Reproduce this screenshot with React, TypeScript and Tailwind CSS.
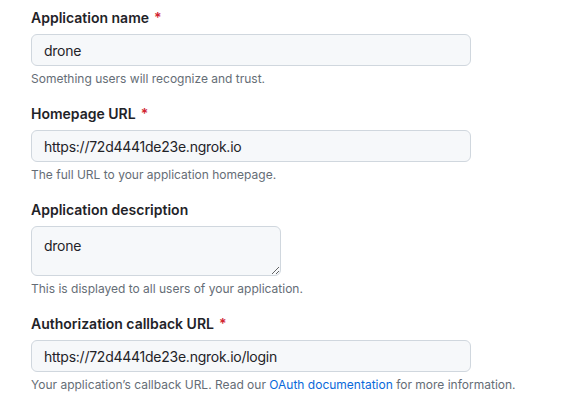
import React from "react";

const font = { fontFamily: "Inter, 'Liberation Sans', sans-serif" };

function Label({ text, required }: { text: string; required?: boolean }) {
  return (
    <label className="block text-[14px] leading-[20px] font-semibold text-[#1f2328] mb-[6px]">
      {text}
      {required && <span className="text-[#d1242f] ml-[5px]">*</span>}
    </label>
  );
}

function Note({ children }: { children: React.ReactNode }) {
  return <p className="text-[12px] leading-[18px] text-[#656d76] mt-[4px]">{children}</p>;
}

const inputCls =
  "block h-[32px] w-[440px] rounded-[6px] border border-[#d0d7de] bg-[#f6f8fa] px-[12px] text-[14px] tracking-[-0.25px] text-[#1f2328] outline-none";

export default function App() {
  return (
    <div className="w-[572px] h-[409px] bg-white pl-[31px] pt-[8px] overflow-hidden" style={font}>
      <div className="mb-[16px]">
        <Label text="Application name" required />
        <input className={inputCls} readOnly value="drone" />
        <Note>Something users will recognize and trust.</Note>
      </div>
      <div className="mb-[16px]">
        <Label text="Homepage URL" required />
        <input className={inputCls} readOnly value="https://72d4441de23e.ngrok.io" />
        <Note>The full URL to your application homepage.</Note>
      </div>
      <div className="mb-[16px]">
        <Label text="Application description" />
        <textarea
          className="block h-[50px] w-[250px] rounded-[6px] border border-[#d0d7de] bg-[#f6f8fa] px-[12px] pt-[9px] pb-[5px] text-[14px] leading-[20px] tracking-[-0.25px] text-[#1f2328] outline-none"
          readOnly
          value="drone"
        />
        <Note>This is displayed to all users of your application.</Note>
      </div>
      <div>
        <Label text="Authorization callback URL" required />
        <input className={inputCls} readOnly value="https://72d4441de23e.ngrok.io/login" />
        <Note>
          Your application’s callback URL. Read our{" "}
          <a className="text-[#0969da]" href="#">OAuth documentation</a> for more information.
        </Note>
      </div>
    </div>
  );
}
